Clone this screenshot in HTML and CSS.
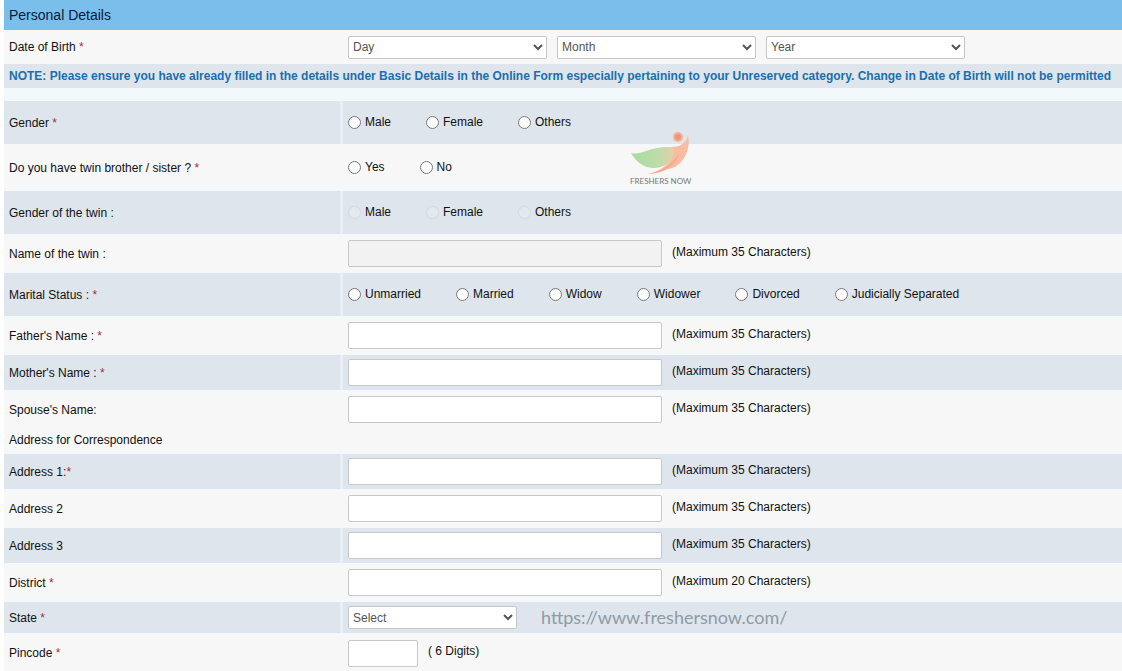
FILE: index.html
```html
<!DOCTYPE html>
<html lang="en">
<head>
<meta charset="utf-8">
<title>Personal Details</title>
<link rel="stylesheet" href="styles.css">
</head>
<body>
<form class="form">
  <h1 class="title">Personal Details</h1>

  <div class="row dates">
    <div class="cell"><label for="day">Date of Birth <span class="req">*</span></label></div>
    <div class="cell field selects">
      <select id="day" class="select"><option>Day</option></select>
      <select class="select" aria-label="Month"><option>Month</option></select>
      <select class="select" aria-label="Year"><option>Year</option></select>
    </div>
  </div>

  <p class="note">NOTE: Please ensure you have already filled in the details under Basic Details in the Online Form especially pertaining to your Unreserved category. Change in Date of Birth will not be permitted</p>

  <div class="row shaded options" role="radiogroup" aria-labelledby="gender">
    <div class="cell" id="gender">Gender&nbsp;<span class="req">*</span></div>
    <div class="cell field radios">
      <label class="radio"><input type="radio" name="gender"><span>Male</span></label>
      <label class="radio"><input type="radio" name="gender"><span>Female</span></label>
      <label class="radio"><input type="radio" name="gender"><span>Others</span></label>
    </div>
  </div>

  <div class="row options" role="radiogroup" aria-labelledby="twin">
    <div class="cell" id="twin">Do you have twin brother / sister ?&nbsp;<span class="req">*</span></div>
    <div class="cell field radios">
      <label class="radio"><input type="radio" name="twin"><span>Yes</span></label>
      <label class="radio"><input type="radio" name="twin"><span>No</span></label>
      <svg class="logo" viewBox="0 0 66 56" role="img" aria-label="Freshers Now">
        <defs>
          <linearGradient id="wing" x1="0" x2="1">
            <stop offset="0" stop-color="#a9dba0"/>
            <stop offset="0.6" stop-color="#bcdcaa"/>
            <stop offset="1" stop-color="#e6cfa8"/>
          </linearGradient>
        </defs>
        <path d="M27 19C34 13 45 16 51 14C57 11 59 8 60 3C63 17 56 30 47 35C38 37 31 42 20 42C32 39 39 34 43 27C46 20 38 18 27 19Z" fill="#f8bd9e"/>
        <path d="M3 21C13 24 22 14 43 15C50 17 45 28 38 33C24 40 10 34 3 21Z" fill="url(#wing)"/>
        <path d="M20 42C34 39 45 32 51 21C49 31 40 37 32 40Z" fill="#f6a98c"/>
        <circle cx="50" cy="5" r="5" fill="#f7b093"/>
        <circle cx="50" cy="5" r="3" fill="#ee9478"/>
        <text x="2" y="52" class="logo-text">FRESHERS NOW</text>
      </svg>
    </div>
  </div>

  <div class="row shaded options" role="radiogroup" aria-labelledby="twin-gender">
    <div class="cell" id="twin-gender">Gender of the twin :</div>
    <div class="cell field radios">
      <label class="radio"><input type="radio" name="twin-gender" disabled><span>Male</span></label>
      <label class="radio"><input type="radio" name="twin-gender" disabled><span>Female</span></label>
      <label class="radio"><input type="radio" name="twin-gender" disabled><span>Others</span></label>
    </div>
  </div>

  <div class="row">
    <div class="cell"><label for="twin-name">Name of the twin :</label></div>
    <div class="cell field"><input class="text" id="twin-name" type="text" maxlength="35" disabled><span class="hint">(Maximum 35 Characters)</span></div>
  </div>

  <div class="row shaded options" role="radiogroup" aria-labelledby="marital">
    <div class="cell" id="marital">Marital Status :&nbsp;<span class="req">*</span></div>
    <div class="cell field radios">
      <label class="radio"><input type="radio" name="marital"><span>Unmarried</span></label>
      <label class="radio"><input type="radio" name="marital"><span>Married</span></label>
      <label class="radio"><input type="radio" name="marital"><span>Widow</span></label>
      <label class="radio"><input type="radio" name="marital"><span>Widower</span></label>
      <label class="radio"><input type="radio" name="marital"><span>Divorced</span></label>
      <label class="radio"><input type="radio" name="marital"><span>Judicially Separated</span></label>
    </div>
  </div>

  <div class="row">
    <div class="cell"><label for="father">Father's Name : <span class="req">*</span></label></div>
    <div class="cell field"><input class="text" id="father" type="text" maxlength="35"><span class="hint">(Maximum 35 Characters)</span></div>
  </div>
  <div class="row shaded">
    <div class="cell"><label for="mother">Mother's Name : <span class="req">*</span></label></div>
    <div class="cell field"><input class="text" id="mother" type="text" maxlength="35"><span class="hint">(Maximum 35 Characters)</span></div>
  </div>
  <div class="row">
    <div class="cell"><label for="spouse">Spouse's Name:</label></div>
    <div class="cell field"><input class="text" id="spouse" type="text" maxlength="35"><span class="hint">(Maximum 35 Characters)</span></div>
  </div>

  <h2 class="subtitle">Address for Correspondence</h2>

  <div class="row shaded">
    <div class="cell"><label for="address1">Address 1:<span class="req">*</span></label></div>
    <div class="cell field"><input class="text" id="address1" type="text" maxlength="35"><span class="hint">(Maximum 35 Characters)</span></div>
  </div>
  <div class="row">
    <div class="cell"><label for="address2">Address 2</label></div>
    <div class="cell field"><input class="text" id="address2" type="text" maxlength="35"><span class="hint">(Maximum 35 Characters)</span></div>
  </div>
  <div class="row shaded">
    <div class="cell"><label for="address3">Address 3</label></div>
    <div class="cell field"><input class="text" id="address3" type="text" maxlength="35"><span class="hint">(Maximum 35 Characters)</span></div>
  </div>
  <div class="row">
    <div class="cell"><label for="district">District <span class="req">*</span></label></div>
    <div class="cell field"><input class="text" id="district" type="text" maxlength="20"><span class="hint">(Maximum 20 Characters)</span></div>
  </div>
  <div class="row shaded">
    <div class="cell"><label for="state">State <span class="req">*</span></label></div>
    <div class="cell field">
      <select class="select state" id="state"><option>Select</option></select>
      <span class="site">https://www.freshersnow.com/</span>
    </div>
  </div>
  <div class="row last">
    <div class="cell"><label for="pincode">Pincode <span class="req">*</span></label></div>
    <div class="cell field"><input class="text pincode" id="pincode" type="text" maxlength="6"><span class="hint">( 6 Digits)</span></div>
  </div>
</form>
</body>
</html>
```

FILE: styles.css
```css
* {
  box-sizing: border-box;
}

body {
  margin: 0;
  background: #fff;
  color: #111;
  font: 12px/16px "Liberation Sans", Arial, sans-serif;
}

.form {
  display: flex;
  flex-direction: column;
  gap: 2px;
  margin-left: 4px;
  background: #f3f8fd;
}

.title {
  margin: 0 0 -2px;
  padding: 5px;
  background: #7abeeb;
  color: #0a1a3c;
  font-size: 14px;
  font-weight: 400;
  line-height: 20px;
}

.row {
  display: grid;
  grid-template-columns: 336px 1fr;
  gap: 3px;
  background: #f7f7f7;
}

.shaded {
  background: #e8eff6;
}

.cell {
  display: flex;
  align-items: center;
  padding: 4px 5px;
  background: #f7f7f7;
}

.shaded .cell {
  background: #dee5ec;
}

.dates {
  min-height: 34px;
}

.options {
  min-height: 43px;
}

.last {
  min-height: 36px;
}

.selects {
  gap: 10px;
}

.note {
  margin: -2px 0 11px;
  padding: 4px 5px;
  background: #dee5ec;
  color: #1a6fb0;
  font-weight: 700;
  white-space: nowrap;
}

.req {
  color: #a03040;
}

.radios {
  position: relative;
  gap: 35px;
}

.radio {
  display: flex;
  align-items: center;
}

.radio input {
  width: 13px;
  height: 13px;
  margin: 0 4px 0 0;
}

.radio input:disabled {
  opacity: 0.4;
}

.radio span {
  padding-bottom: 2px;
}

.text {
  width: 314px;
  height: 27px;
  padding: 2px 4px;
  border: 1px solid #c6c8ca;
  border-radius: 2px;
  background: #fff;
  font: inherit;
}

.text:disabled {
  background: #f2f2f2;
}

.pincode {
  width: 70px;
}

.hint {
  padding: 0 10px 4px;
}

.select {
  width: 199px;
  height: 23px;
  border: 1px solid #c4c6c8;
  border-radius: 2px;
  background: #fff;
  color: #555;
  font: inherit;
}

.state {
  width: 169px;
}

.subtitle {
  margin: -2px 0 0;
  padding: 5px 5px 4px;
  background: #f7f7f7;
  font-size: 12px;
  font-weight: 400;
}

.site {
  margin-left: 24px;
  padding-bottom: 2px;
  color: #8f9ba5;
  font: 18px/20px Lato, sans-serif;
}

.logo {
  position: absolute;
  top: -14px;
  left: 285px;
  width: 66px;
  height: 56px;
}

.logo-text {
  fill: #777;
  font: 8px Lato, sans-serif;
}
```
